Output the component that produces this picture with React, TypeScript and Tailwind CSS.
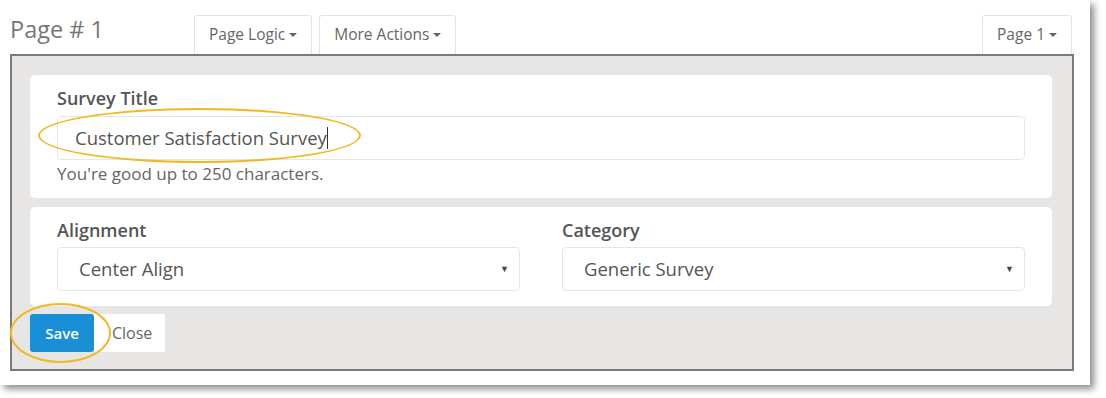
import React from 'react';

const Caret = () => (
  <span className="ml-1 inline-block w-0 h-0 border-l-[4px] border-r-[4px] border-t-[4px] border-l-transparent border-r-transparent border-t-[#666] align-middle" />
);

const TabButton = ({ label, className = '' }: { label: string; className?: string }) => (
  <button
    type="button"
    className={`h-[39px] px-[14px] flex items-center rounded-t-[3px] border border-b-0 border-[#e3e3e3] bg-white text-[15.5px] text-[#666] ${className}`}
  >
    {label}
    <Caret />
  </button>
);

const Select = ({ value }: { value: string }) => (
  <div className="h-[44px] flex items-center justify-between rounded-[4px] border border-[#e6e6e6] bg-white pl-[21px] pr-[10px] text-[18.5px] text-[#555]">
    <span>{value}</span>
    <span className="text-[9px] text-[#444]">▼</span>
  </div>
);

export default function App() {
  return (
    <div className="w-[1106px] h-[398px] bg-white" style={{ fontFamily: '"Open Sans", "Noto Sans", sans-serif' }}>
      <div className="relative w-[1090px] h-[385px] bg-white pl-[10px] shadow-[4px_4px_7px_rgba(0,0,0,0.45)]">
        {/* Header */}
        <div className="flex items-end h-[54px] w-[1064px]">
          <div className="self-start pt-[14px] text-[23.5px] leading-[30px] text-[#777]">Page # 1</div>
          <div className="flex gap-[7px] ml-[90px]">
            <TabButton label="Page Logic" />
            <TabButton label="More Actions" />
          </div>
          <TabButton label="Page 1" className="ml-auto mr-[2px]" />
        </div>

        {/* Panel */}
        <div className="w-[1064px] h-[317px] border-2 border-[#7a7a7a] bg-[#e7e6e5] pt-[19px] pl-[18px] pr-[20px]">
          <div className="flex flex-col gap-[9px]">
            <div className="h-[123px] rounded-[5px] bg-white pt-[12px] px-[27px]">
              <div className="text-[18px] font-semibold leading-[22px] text-[#555]">Survey Title</div>
              <div className="mt-[7px] h-[44px] flex items-center rounded-[4px] border border-[#e6e6e6] bg-white pl-[17px] text-[18.5px] text-[#555]">
                Customer Satisfaction Survey
                <span className="inline-block w-px h-[22px] bg-[#333]" />
              </div>
              <div className="mt-[4px] text-[17px] leading-[20px] text-[#666]">You're good up to 250 characters.</div>
            </div>

            <div className="h-[99px] rounded-[5px] bg-white pt-[12px] px-[27px]">
              <div className="grid grid-cols-2 gap-[42px]">
                <div>
                  <div className="text-[18px] font-semibold leading-[22px] text-[#555]">Alignment</div>
                  <div className="mt-[6px]">
                    <Select value="Center Align" />
                  </div>
                </div>
                <div>
                  <div className="text-[18px] font-semibold leading-[22px] text-[#555]">Category</div>
                  <div className="mt-[6px]">
                    <Select value="Generic Survey" />
                  </div>
                </div>
              </div>
            </div>
          </div>

          <div className="mt-[8px] flex">
            <button type="button" className="h-[38px] w-[64px] rounded-[3px] bg-[#1b8fd6] text-[15px] font-semibold text-white">
              Save
            </button>
            <button type="button" className="h-[38px] w-[71px] bg-white pl-[18px] text-left text-[16px] text-[#666]">
              Close
            </button>
          </div>
        </div>

        {/* Highlight annotations */}
        <div className="absolute left-[38px] top-[108px] w-[323px] h-[55px] rounded-[50%] border-2 border-[#f2b824] pointer-events-none" />
        <div className="absolute left-[10px] top-[303px] w-[101px] h-[60px] rounded-[50%] border-2 border-[#f2b824] pointer-events-none" />
      </div>
    </div>
  );
}
